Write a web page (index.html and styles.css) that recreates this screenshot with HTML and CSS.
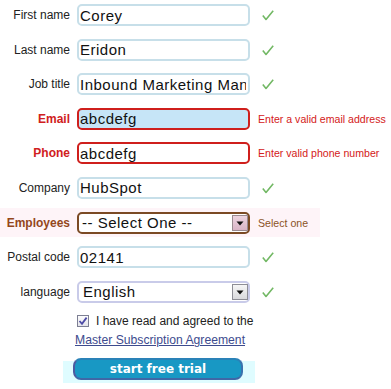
FILE: index.html
```html
<!DOCTYPE html>
<html lang="en">
<head>
<meta charset="utf-8">
<title>Sign up</title>
<link rel="stylesheet" href="styles.css">
</head>
<body>
<form class="signup">
  <div class="row">
    <label class="lbl">First name</label>
    <input class="field" value="Corey">
    <span class="ok"><svg width="12" height="11" viewBox="0 0 12 11"><path d="M0.8 5.6 L4 9.4 L11.2 0.8" fill="none" stroke="#72b864" stroke-width="1.6" stroke-linejoin="round"/></svg></span>
  </div>
  <div class="row">
    <label class="lbl">Last name</label>
    <input class="field" value="Eridon">
    <span class="ok"><svg width="12" height="11" viewBox="0 0 12 11"><path d="M0.8 5.6 L4 9.4 L11.2 0.8" fill="none" stroke="#72b864" stroke-width="1.6" stroke-linejoin="round"/></svg></span>
  </div>
  <div class="row">
    <label class="lbl">Job title</label>
    <input class="field" value="Inbound Marketing Manager">
    <span class="ok"><svg width="12" height="11" viewBox="0 0 12 11"><path d="M0.8 5.6 L4 9.4 L11.2 0.8" fill="none" stroke="#72b864" stroke-width="1.6" stroke-linejoin="round"/></svg></span>
  </div>
  <div class="row">
    <label class="lbl lbl-err">Email</label>
    <input class="field field-err field-focus" value="abcdefg">
    <span class="msg">Enter a valid email address</span>
  </div>
  <div class="row">
    <label class="lbl lbl-err">Phone</label>
    <input class="field field-err" value="abcdefg">
    <span class="msg">Enter valid phone number</span>
  </div>
  <div class="row">
    <label class="lbl">Company</label>
    <input class="field" value="HubSpot">
    <span class="ok"><svg width="12" height="11" viewBox="0 0 12 11"><path d="M0.8 5.6 L4 9.4 L11.2 0.8" fill="none" stroke="#72b864" stroke-width="1.6" stroke-linejoin="round"/></svg></span>
  </div>
  <div class="row row-warn">
    <label class="lbl lbl-warn">Employees</label>
    <div class="selectbox selectbox-warn">
      <select class="pick"><option>-- Select One --</option></select>
      <span class="arrow arrow-warn"><svg width="14" height="14" viewBox="0 0 14 14"><path d="M3.5 5.5 H10.5 L7 9.5 Z" fill="#111"/></svg></span>
    </div>
    <span class="msg msg-warn">Select one</span>
  </div>
  <div class="row">
    <label class="lbl">Postal code</label>
    <input class="field" value="02141">
    <span class="ok"><svg width="12" height="11" viewBox="0 0 12 11"><path d="M0.8 5.6 L4 9.4 L11.2 0.8" fill="none" stroke="#72b864" stroke-width="1.6" stroke-linejoin="round"/></svg></span>
  </div>
  <div class="row">
    <label class="lbl">language</label>
    <div class="selectbox selectbox-lang">
      <select class="pick pick-lang"><option>English</option></select>
      <span class="arrow"><svg width="14" height="14" viewBox="0 0 14 14"><path d="M3.5 5.5 H10.5 L7 9.5 Z" fill="#111"/></svg></span>
    </div>
    <span class="ok"><svg width="12" height="11" viewBox="0 0 12 11"><path d="M0.8 5.6 L4 9.4 L11.2 0.8" fill="none" stroke="#72b864" stroke-width="1.6" stroke-linejoin="round"/></svg></span>
  </div>
  <div class="agree">
    <span class="box"><svg width="10" height="10" viewBox="0 0 10 10"><path d="M1.5 5 L4 7.8 L8.6 1.6" fill="none" stroke="#4d4ba6" stroke-width="1.8"/></svg></span>
    <span class="agree-text">I have read and agreed to the</span>
  </div>
  <a class="msa" href="#">Master Subscription Agreement</a>
  <div class="cta-wrap">
    <button type="button" class="cta">start free trial</button>
  </div>
</form>
</body>
</html>
```
FILE: styles.css
```css
body {
  margin: 0;
  background: #fff;
  font-family: "Liberation Sans", Arial, sans-serif;
  color: #222;
}

.signup {
  display: flex;
  flex-direction: column;
  align-items: flex-start;
}

.row {
  display: flex;
  align-items: flex-start;
  height: 34.6px;
  padding-top: 4px;
  box-sizing: border-box;
  width: 391px;
}

.row-warn {
  background: linear-gradient(#fef4f8, #fef4f8) 0 -2px / 320px 31px no-repeat;
}

.lbl {
  flex: 0 0 70px;
  margin-right: 7px;
  text-align: right;
  font-size: 12px;
  line-height: 22px;
  color: #222;
  white-space: nowrap;
}

.lbl-err {
  color: #d02020;
  font-weight: bold;
}

.lbl-warn {
  color: #94471c;
  font-weight: bold;
}

.field {
  flex: 0 0 173px;
  width: 173px;
  height: 22px;
  box-sizing: border-box;
  margin: 0;
  padding: 0 2px 0 1px;
  border: 2px solid #c7dfe9;
  border-radius: 5px;
  background: #fff;
  font-family: "Liberation Sans", Arial, sans-serif;
  font-size: 15px;
  letter-spacing: 0.5px;
  color: #111;
  outline: none;
}

.field-err {
  border-color: #cf1f1c;
}

.field-focus {
  background: #c6e5f7;
}

.ok {
  margin-left: 12px;
  margin-top: 6px;
  display: flex;
}

.msg {
  margin-left: 8px;
  font-size: 10.6px;
  line-height: 22px;
  color: #d42020;
  white-space: nowrap;
}

.msg-warn {
  color: #8b5326;
}

.selectbox {
  position: relative;
  flex: 0 0 173px;
  width: 173px;
  height: 22px;
  box-sizing: border-box;
  border: 2px solid #c9cbe9;
  border-radius: 5px;
  background: #fff;
}

.selectbox-warn {
  border-color: #7b4a24;
}

.pick {
  appearance: none;
  -webkit-appearance: none;
  display: block;
  width: 100%;
  height: 18px;
  margin: 0;
  padding: 0 0 0 3px;
  border: 0;
  background: transparent;
  font-family: "Liberation Sans", Arial, sans-serif;
  font-size: 15px;
  letter-spacing: 0.5px;
  color: #111;
  outline: none;
}

.pick-lang {
  padding-left: 4px;
}

.arrow {
  position: absolute;
  right: 0;
  top: 1px;
  width: 14px;
  height: 14px;
  border: 1px solid #8e8e96;
  background: linear-gradient(#f6f6f6, #d9d9dc);
  display: flex;
}

.arrow-warn {
  background: linear-gradient(#ecd4e0, #d9b4c6);
  border-color: #9a8a90;
}

.agree {
  display: flex;
  align-items: center;
  margin: 3px 0 0 77px;
  height: 14px;
}

.box {
  width: 10px;
  height: 10px;
  border: 1px solid #7d7f93;
  background: linear-gradient(#fdfdfd, #e4e4ea);
  display: flex;
}

.agree-text {
  margin-left: 7px;
  font-size: 12px;
  color: #222;
  white-space: nowrap;
}

.msa {
  margin: 5px 0 0 75px;
  font-size: 12.2px;
  line-height: 14px;
  color: #3d4b8e;
  text-decoration: underline;
}

.cta-wrap {
  margin: 11px 0 0 63px;
  width: 192px;
  height: 25px;
  background: linear-gradient(#dffcff, #dffcff) 0 3px / 100% 22px no-repeat;
}

.cta {
  margin: 0 0 0 10px;
  width: 170px;
  height: 22px;
  padding: 0;
  border: 2px solid #2a82b8;
  border-left-color: #4b5aa0;
  border-bottom-color: #3f67a6;
  border-right-color: #3a72ae;
  border-radius: 8px;
  background: #1898c4;
  color: #fff;
  font-family: "DejaVu Sans", Verdana, sans-serif;
  font-weight: bold;
  font-size: 12px;
  cursor: pointer;
}
```
